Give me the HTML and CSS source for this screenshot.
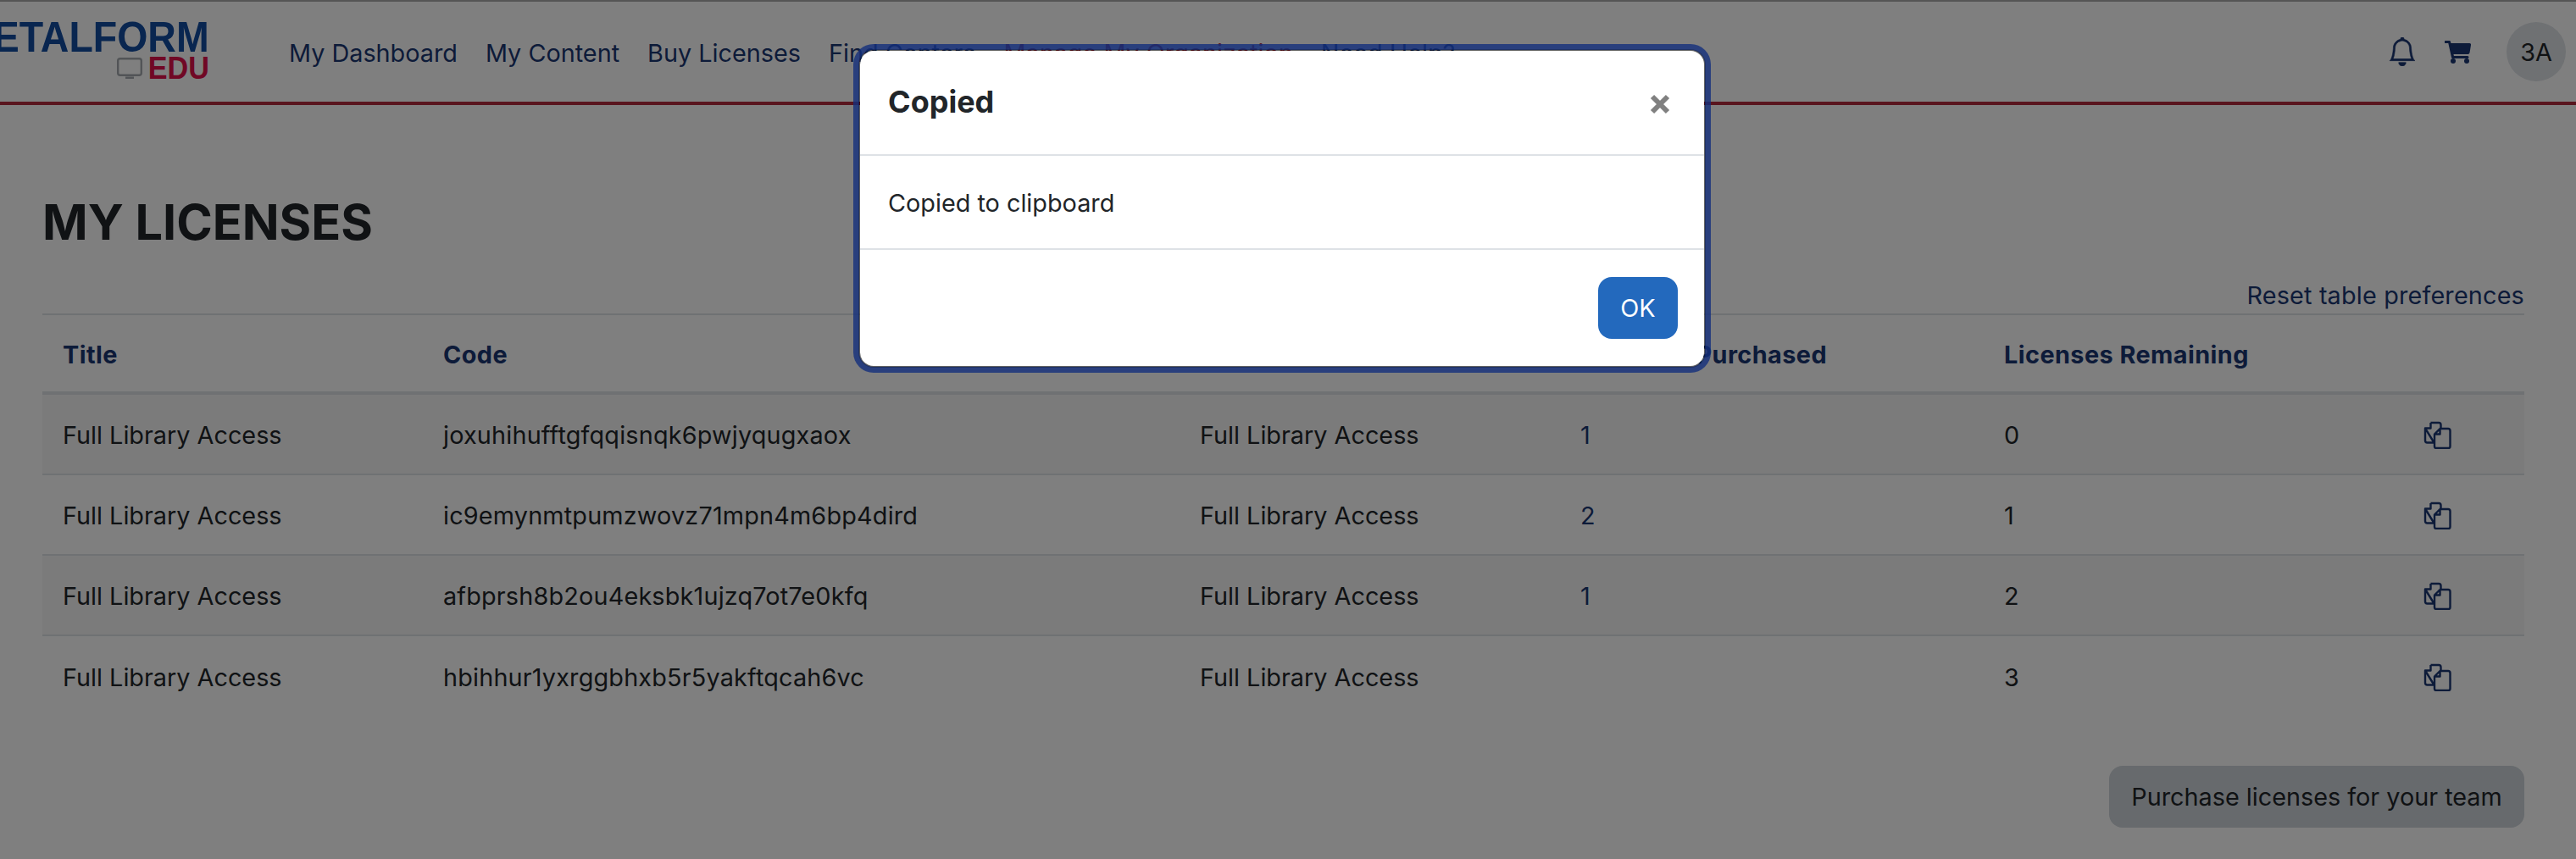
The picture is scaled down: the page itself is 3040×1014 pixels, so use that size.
FILE: index.html
```html
<!DOCTYPE html>
<html lang="en">

<head>
    <meta charset="UTF-8">
    <meta name="viewport" content="width=device-width, initial-scale=1.0">
    <title>My Licenses</title>
    <link rel="stylesheet" href="styles.css">
</head>

<body>
    <nav class="topnav">
        <a class="logo" href="#">
            <span class="logo-name">METALFORM</span>
            <span class="logo-sub">
                <svg class="logo-screen" viewBox="0 0 30 26" width="30" height="26">
                    <rect x="1.2" y="1.2" width="27.6" height="19.6" rx="2.5" fill="none" stroke="#a4a9ae" stroke-width="2.4" />
                    <rect x="10" y="22.5" width="10" height="2.5" fill="#a4a9ae" />
                </svg>
                <span class="logo-edu">EDU</span>
            </span>
        </a>
        <ul class="nav-links">
            <li><a href="#">My Dashboard</a></li>
            <li><a href="#">My Content</a></li>
            <li><a href="#">Buy Licenses</a></li>
            <li><a href="#">Find Centers</a></li>
            <li><a href="#" class="nav-red">Manage My Organization</a></li>
            <li><a href="#">Need Help?</a></li>
        </ul>
        <div class="nav-right">
            <svg class="nav-bell" viewBox="0 0 16 16" width="34" height="34" fill="#1a3672" stroke="#1a3672" stroke-width="0.3">
                <path d="M8 16a2 2 0 0 0 2-2H6a2 2 0 0 0 2 2zM8 1.918l-.797.161A4.002 4.002 0 0 0 4 6c0 .628-.134 2.197-.459 3.742-.16.767-.376 1.566-.663 2.258h10.244c-.287-.692-.502-1.49-.663-2.258C12.134 8.197 12 6.628 12 6a4.002 4.002 0 0 0-3.203-3.92L8 1.917zM14.22 12c.223.447.481.801.78 1H1c.299-.199.557-.553.78-1C2.68 10.2 3 6.88 3 6c0-2.42 1.72-4.44 4.005-4.901a1 1 0 1 1 1.99 0A5.002 5.002 0 0 1 13 6c0 .88.32 4.2 1.22 6z" />
            </svg>
            <svg class="nav-cart" viewBox="0 0 31 27" width="31" height="27" fill="#1a3672">
                <path d="M1 0h4.500a1.500 1.500 0 0 1 1.500 1.200L7.400 3H29a2 2 0 0 1 2 2.300l-1.500 9a2 2 0 0 1-2 1.700H10.500l.4 2H27a1.500 1.500 0 0 1 0 3H9.500a1.500 1.500 0 0 1-1.500-1.200L4.300 3H1a1.500 1.500 0 0 1 0-3z" />
                <circle cx="10" cy="24" r="3" />
                <circle cx="26" cy="24" r="3" />
            </svg>
            <div class="avatar">3A</div>
        </div>
    </nav>

    <main class="page">
        <h1>MY LICENSES</h1>
        <div class="reset-row"><a href="#">Reset table preferences</a></div>
        <table class="lic-table">
            <thead>
                <tr>
                    <th class="col-title">Title</th>
                    <th class="col-code">Code</th>
                    <th class="col-product">Product</th>
                    <th class="col-bought">Licenses Purchased</th>
                    <th class="col-left">Licenses Remaining</th>
                    <th></th>
                </tr>
            </thead>
            <tbody>
                <tr class="striped">
                    <td>Full Library Access</td>
                    <td class="code">joxuhihufftgfqqisnqk6pwjyqugxaox</td>
                    <td>Full Library Access</td>
                    <td><a href="#">1</a></td>
                    <td>0</td>
                    <td><svg class="copy-icon" viewBox="0 0 33 33" width="33" height="33"><use href="#copy" /></svg></td>
                </tr>
                <tr>
                    <td>Full Library Access</td>
                    <td class="code">ic9emynmtpumzwovz71mpn4m6bp4dird</td>
                    <td>Full Library Access</td>
                    <td><a href="#">2</a></td>
                    <td>1</td>
                    <td><svg class="copy-icon" viewBox="0 0 33 33" width="33" height="33"><use href="#copy" /></svg></td>
                </tr>
                <tr class="striped">
                    <td>Full Library Access</td>
                    <td class="code">afbprsh8b2ou4eksbk1ujzq7ot7e0kfq</td>
                    <td>Full Library Access</td>
                    <td><a href="#">1</a></td>
                    <td>2</td>
                    <td><svg class="copy-icon" viewBox="0 0 33 33" width="33" height="33"><use href="#copy" /></svg></td>
                </tr>
                <tr class="last-row">
                    <td>Full Library Access</td>
                    <td class="code">hbihhur1yxrggbhxb5r5yakftqcah6vc</td>
                    <td>Full Library Access</td>
                    <td></td>
                    <td>3</td>
                    <td><svg class="copy-icon" viewBox="0 0 33 33" width="33" height="33"><use href="#copy" /></svg></td>
                </tr>
            </tbody>
        </table>
        <div class="buy-row"><button class="buy-btn" type="button">Purchase licenses for your team</button></div>
    </main>

    <!-- shared copy icon -->
    <svg class="svg-defs" width="0" height="0">
        <symbol id="copy" viewBox="0 0 33 33">
            <path d="M8.500 2H18a2.500 2.500 0 0 1 2.500 2.500V9M12.500 25.500H4.500A2.500 2.500 0 0 1 2 23V8.500zM8.500 2v6.500H2" fill="none" stroke="#1a3672" stroke-width="2.400" stroke-linejoin="round" />
            <path d="M19.500 9H29a2.500 2.500 0 0 1 2.500 2.500v18.500a2 2 0 0 1-2 2H15a2 2 0 0 1-2-2V15.500zM19.500 9v6.500H13" fill="none" stroke="#1a3672" stroke-width="2.400" stroke-linejoin="round" />
        </symbol>
    </svg>

    <div class="backdrop"></div>

    <div class="modal">
        <div class="modal-header">
            <h5>Copied</h5>
            <svg class="modal-close" viewBox="0 0 24 24" width="24" height="24">
                <path d="M3 3 21 21M21 3 3 21" stroke="#808080" stroke-width="6" />
            </svg>
        </div>
        <div class="modal-body">Copied to clipboard</div>
        <div class="modal-footer"><button class="ok-btn" type="button">OK</button></div>
    </div>
</body>

</html>
```

FILE: styles.css
```css
* {
    box-sizing: border-box;
}

html,
body {
    height: 1014px;
}

body {
    margin: 0;
    overflow: hidden;
    position: relative;
    background-color: #fff;
    color: #212529;
    font-family: Inter, "Noto Sans", sans-serif;
    font-size: 28.8px;
}

a {
    color: #1a3672;
    text-decoration: none;
}

/* top nav */
.topnav {
    display: flex;
    align-items: center;
    height: 124px;
    border-top: 2px solid #aaa;
    border-bottom: 4px solid #b32b3c;
}

.logo {
    display: flex;
    flex-direction: column;
    align-items: flex-end;
    justify-content: center;
    width: 247px;
    flex-shrink: 0;
    padding-bottom: 5px;
    white-space: nowrap;
    font-family: "Liberation Sans", sans-serif;
    font-weight: 700;
}

.logo-name {
    font-size: 50px;
    line-height: 44px;
    color: #124ca0;
    transform: scaleX(0.93);
    transform-origin: right center;
}

.logo-sub {
    display: flex;
    align-items: center;
    gap: 7px;
    height: 30px;
}

.logo-edu {
    margin-left: -4px;
    font-size: 36px;
    color: #e0104a;
    transform: scaleX(0.95);
    transform-origin: right center;
}

.nav-links {
    display: flex;
    gap: 33px;
    list-style: none;
    margin: 0 0 0 94px;
    padding: 3px 0 0 0;
    white-space: nowrap;
}

.nav-red {
    color: #b32b3c;
}

.nav-right {
    display: flex;
    align-items: center;
    margin-left: auto;
    margin-right: 12px;
}

.nav-bell {
    margin-right: 33px;
}

.nav-cart {
    margin-right: 42px;
}

.avatar {
    display: flex;
    align-items: center;
    justify-content: center;
    width: 70px;
    height: 70px;
    border-radius: 50%;
    background-color: #dee2e6;
}

/* page */
.page {
    padding: 0 61px 0 50px;
}

h1 {
    margin: 104px 0 0 0;
    font-size: 57.6px;
    line-height: 68px;
    font-weight: 700;
}

.reset-row {
    display: flex;
    justify-content: flex-end;
    align-items: center;
    height: 40px;
    margin: 32px 0 2px 0;
    letter-spacing: 0.17px;
}

.lic-table {
    width: 100%;
    table-layout: fixed;
    border-collapse: separate;
    border-spacing: 0;
}

.lic-table th {
    height: 96px;
    padding: 2px 24px 0 24px;
    text-align: left;
    font-weight: 700;
    letter-spacing: 0.45px;
    color: #1a3672;
    border-top: 2px solid #dee2e6;
    border-bottom: 4px solid #dee2e6;
}

.lic-table td {
    height: 95px;
    padding: 2px 24px 0 24px;
    border-bottom: 2px solid #dee2e6;
}

.lic-table .code {
    letter-spacing: 0.18px;
}

.last-row td {
    border-bottom: none;
}

.striped td {
    background-color: #f6f6f6;
}

.col-title {
    width: 449px;
}

.col-code {
    width: 893px;
}

.col-product {
    width: 449px;
}

.col-bought {
    width: 500px;
}

.col-left {
    width: 495px;
}

.copy-icon {
    display: block;
}

.svg-defs {
    position: absolute;
}

.buy-row {
    display: flex;
    justify-content: flex-end;
    margin-top: 58px;
}

.buy-btn {
    height: 73px;
    width: 490px;
    border: none;
    border-radius: 16px;
    background-color: #ced4da;
    color: #212529;
    font-family: inherit;
    font-size: 28.8px;
}

/* modal on top */
.backdrop {
    position: absolute;
    top: 0;
    left: 0;
    right: 0;
    bottom: 0;
    background-color: rgba(0, 0, 0, 0.5);
}

.modal {
    position: absolute;
    top: 58px;
    left: 1013px;
    width: 1000px;
    height: 376px;
    display: flex;
    flex-direction: column;
    background-color: #fff;
    background-clip: padding-box;
    border: 2px solid rgba(0, 0, 0, 0.2);
    border-radius: 18px;
    box-shadow: 0 0 0 6px rgba(20, 47, 125, 0.8);
}

.modal-header {
    display: flex;
    align-items: center;
    justify-content: space-between;
    height: 124px;
    padding: 0 40px 0 33px;
    border-bottom: 2px solid #dee2e6;
}

.modal-header h5 {
    margin: 0;
    font-size: 36px;
    font-weight: 700;
    line-height: 1.2;
}

.modal-close {
    margin-top: 4px;
}

.modal-body {
    display: flex;
    align-items: center;
    height: 111px;
    padding: 2px 33px 0 33px;
    border-bottom: 2px solid #dee2e6;
}

.modal-footer {
    display: flex;
    justify-content: flex-end;
    padding: 32px 31px 0 0;
}

.ok-btn {
    width: 94px;
    height: 73px;
    border: none;
    border-radius: 16px;
    background-color: #2369bd;
    color: #fff;
    font-family: inherit;
    font-size: 28.8px;
}
```
